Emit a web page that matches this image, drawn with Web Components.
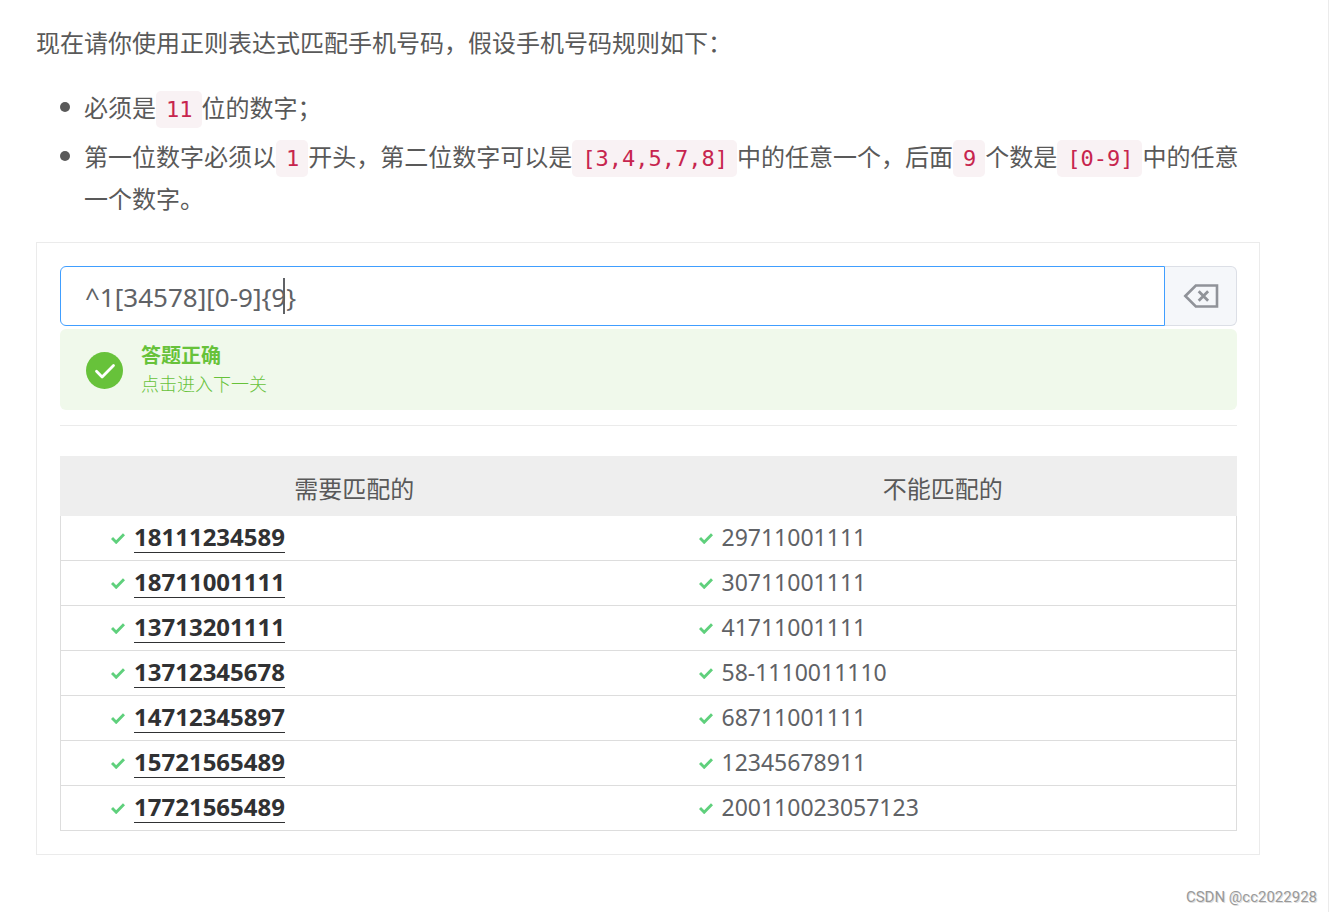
<!DOCTYPE html>
<html lang="zh-CN">
<head>
<meta charset="utf-8">
<meta name="viewport" content="width=device-width, initial-scale=1">
<title>正则表达式练习</title>
<style>
  body {
    margin: 0;
    background: #fff;
    color: #595959;
    font-family: "Noto Sans", "Noto Sans CJK SC", sans-serif;
    font-size: 24px;
    line-height: 42px;
  }
</style>
</head>
<body>
<lesson-page>
  <task-brief></task-brief>
  <exercise-card>
    <regex-field value="^1[34578][0-9]{9}"></regex-field>
    <result-alert>
      <span slot="title">答题正确</span>
      <a slot="link" href="#next">点击进入下一关</a>
    </result-alert>
    <match-table></match-table>
  </exercise-card>
  <span slot="mark">CSDN @cc2022928</span>
</lesson-page>

<script>
const define = (name, html, setup) => {
  customElements.define(name, class extends HTMLElement {
    constructor() {
      super();
      this.attachShadow({ mode: 'open' }).innerHTML = html.trim();
    }
    connectedCallback() {
      if (setup) setup(this, this.shadowRoot);
    }
  });
};

define('lesson-page', `
  <style>
    :host { display: block; position: relative; }
    main {
      box-sizing: border-box;
      min-height: 100vh;
      margin-right: 3px;
      padding: 21px 68px 56px 36px;
      border-right: 1px solid #ebebeb;
    }
    .mark {
      position: absolute;
      right: 15px;
      bottom: 5px;
      font: 15px/20px Roboto, sans-serif;
      color: #999;
      text-shadow: 1px 1px 0 #ddd;
    }
  </style>
  <main><slot></slot></main>
  <div class="mark"><slot name="mark"></slot></div>
`);

define('code-chip', `
  <style>
    :host { display: inline; }
    code {
      padding: 6px 9px 6px 10px;
      border-radius: 5px;
      background: #f9f2f4;
      color: #c7254e;
      font: 22px/24px "DejaVu Sans Mono", monospace;
      white-space: nowrap;
    }
  </style><code><slot></slot></code>`);

define('task-brief', `
  <style>
    :host { display: block; font-family: "Noto Sans CJK SC", sans-serif; }
    p { margin: 0 0 23px; }
    ul { margin: 0 0 23px; padding: 0; list-style: none; }
    li { display: grid; grid-template-columns: 24px 1fr; padding-left: 24px; }
    li + li { margin-top: 7px; }
    li::before {
      content: "";
      width: 10px;
      height: 10px;
      margin-top: 16px;
      border-radius: 50%;
      background: currentColor;
    }
  </style>
  <p>现在请你使用正则表达式匹配手机号码，假设手机号码规则如下：</p>
  <ul>
    <li><span>必须是<code-chip>11</code-chip>位的数字；</span></li>
    <li><span>第一位数字必须以<code-chip>1</code-chip>开头，第二位数字可以是<code-chip>[3,4,5,7,8]</code-chip>中的任意一个，后面<code-chip>9</code-chip>个数是<code-chip>[0-9]</code-chip>中的任意一个数字。</span></li>
  </ul>
`);

define('exercise-card', `
  <style>
    :host { display: block; padding: 23px 22px 23px 23px; border: 1px solid #ebebeb; }
  </style>
  <slot></slot>
`);

define('regex-field', `
  <style>
    :host { display: flex; height: 60px; margin-bottom: 3px; }
    .box { position: relative; flex: 1; display: flex; }
    input {
      box-sizing: border-box;
      width: 100%;
      margin: 0;
      padding: 2px 24px 0;
      border: 1px solid #409eff;
      border-radius: 6px 0 0 6px;
      outline: 0;
      background: #fff;
      color: #606266;
      font: 26px "Noto Sans", sans-serif;
    }
    .caret {
      position: absolute;
      left: 223px;
      top: 12px;
      width: 2px;
      height: 36px;
      background: #606266;
    }
    button {
      box-sizing: border-box;
      width: 72px;
      padding: 0;
      border: 1px solid #dcdfe6;
      border-left: 0;
      border-radius: 0 6px 6px 0;
      background: #f5f7fa;
      color: #909399;
      display: grid;
      place-items: center;
    }
    svg { display: block; }
  </style>
  <div class="box">
    <input type="text" aria-label="正则表达式" spellcheck="false">
    <span class="caret"></span>
  </div>
  <button type="button" aria-label="清空">
    <svg width="36" height="24" viewBox="0 0 36 24" fill="none" stroke="currentColor">
      <path d="M2.3 12 12.8 1.5H34v21H12.8Z" stroke-width="2.6"/>
      <path d="m15.7 7.3 9.4 9.4m0-9.4-9.4 9.4" stroke-width="2.8"/>
    </svg>
  </button>
`, (host, root) => {
  root.querySelector('input').value = host.getAttribute('value') || '';
});

define('result-alert', `
  <style>
    :host {
      display: flex;
      align-items: center;
      gap: 18px;
      padding: 13px 26px 12px;
      border-radius: 6px;
      background: #f0f9eb;
      color: #67c23a;
      line-height: 28px;
    }
    svg { flex: none; display: block; }
    .title { font-size: 20px; font-weight: 700; }
    .link { font-size: 18px; font-weight: 300; }
    ::slotted(a) { color: inherit; text-decoration: none; }
  </style>
  <svg width="37" height="37" viewBox="0 0 37 37" aria-hidden="true">
    <circle cx="18.5" cy="18.5" r="18.5" fill="#67c23a"/>
    <path d="m10.5 19.3 5.6 5.6L27.5 13.5" fill="none" stroke="#fff" stroke-width="2.8" stroke-linecap="round" stroke-linejoin="round"/>
  </svg>
  <div>
    <div class="title"><slot name="title"></slot></div>
    <div class="link"><slot name="link"></slot></div>
  </div>
`);

define('match-item', `
  <style>
    :host { display: flex; align-items: center; gap: 9px; height: 44px; padding-left: 50px; }
    svg { flex: none; display: block; }
    span {
      border-bottom: 1px solid transparent;
      color: #606266;
      font-size: 23px;
      line-height: 29px;
    }
    :host([matched]) span {
      padding-bottom: 2px;
      border-color: #303133;
      color: #303133;
      font-size: 24px;
      font-weight: 700;
      line-height: 27px;
    }
  </style>
  <svg width="14" height="12" viewBox="0 0 14 12" aria-hidden="true">
    <path d="m1 6 4.2 4.2L13 2.2" fill="none" stroke="#5fd07c" stroke-width="2.9"/>
  </svg>
  <span><slot></slot></span>
`);

define('match-table', `
  <style>
    :host { display: block; margin-top: 15px; padding-top: 30px; border-top: 1px solid #ebebeb; }
    table { width: 100%; table-layout: fixed; border-collapse: separate; border-spacing: 0; }
    th {
      height: 54px;
      padding: 6px 0 0;
      background: #eee;
      font-size: 24px;
      font-weight: 400;
      line-height: 42px;
      text-align: center;
    }
    td { padding: 0; border-bottom: 1px solid #ddd; }
    td:first-child { border-left: 1px solid #ddd; }
    td:last-child { border-right: 1px solid #ddd; }
  </style>
  <table>
    <thead><tr><th scope="col">需要匹配的</th><th scope="col">不能匹配的</th></tr></thead>
    <tbody></tbody>
  </table>
`, (host, root) => {
  const rows = [
    ['18111234589', '29711001111'],
    ['18711001111', '30711001111'],
    ['13713201111', '41711001111'],
    ['13712345678', '58-1110011110'],
    ['14712345897', '68711001111'],
    ['15721565489', '12345678911'],
    ['17721565489', '200110023057123']
  ];
  root.querySelector('tbody').innerHTML = rows.map(([yes, no]) =>
    `<tr><td><match-item matched>${yes}</match-item></td><td><match-item>${no}</match-item></td></tr>`
  ).join('');
});
</script>
</body>
</html>
